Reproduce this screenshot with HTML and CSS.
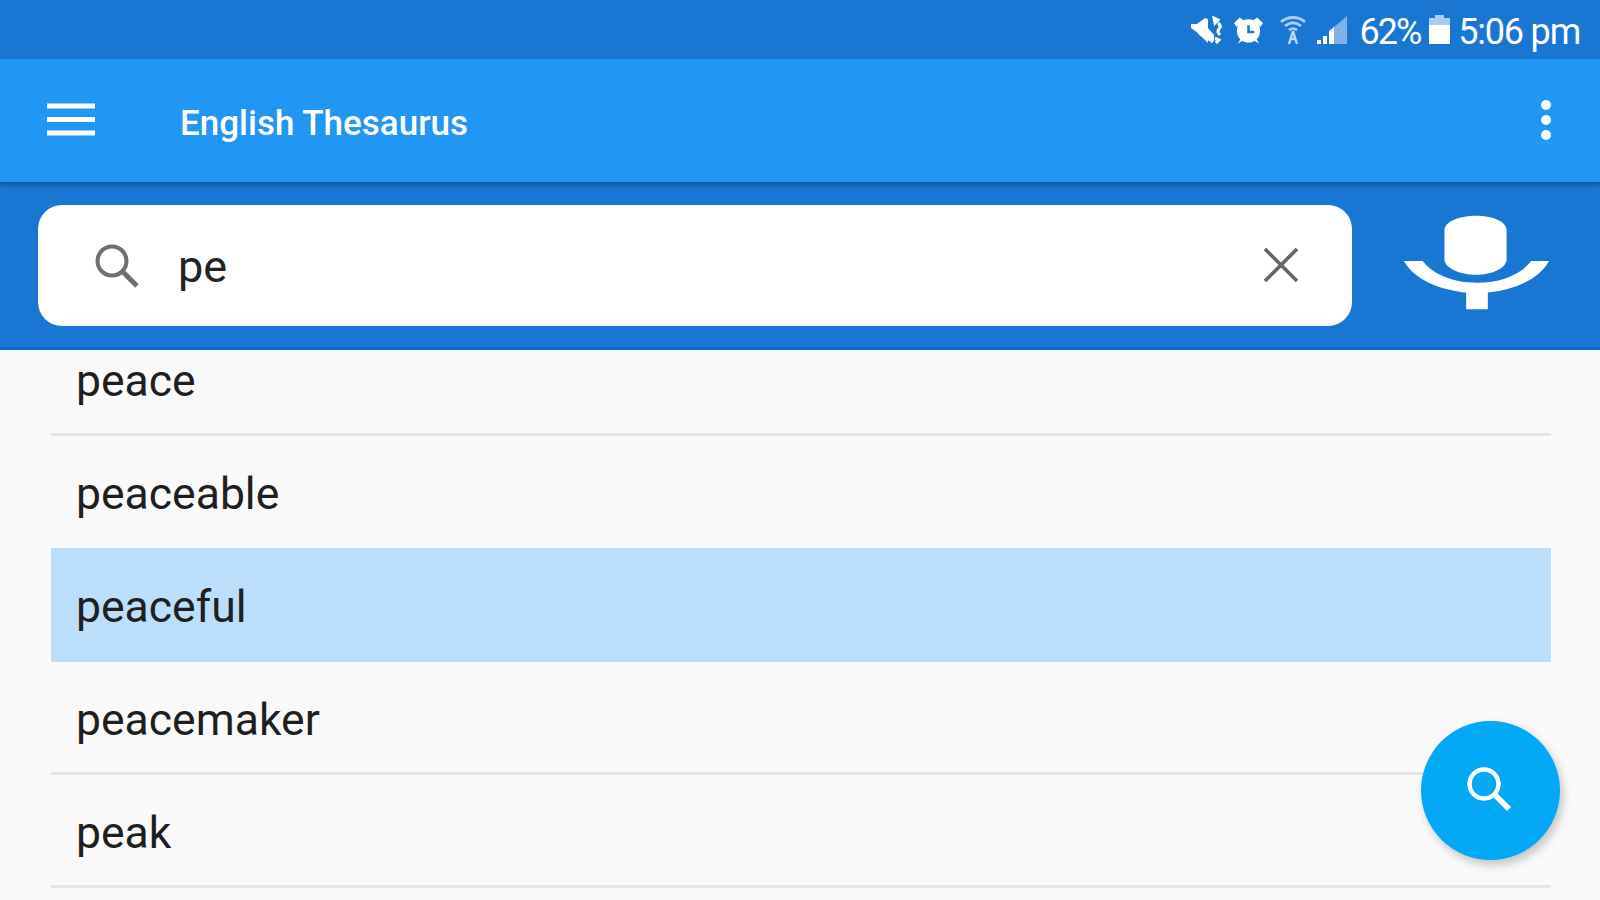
FILE: index.html
```html
<!DOCTYPE html>
<html lang="en">
<head>
  <meta charset="UTF-8">
  <meta name="viewport" content="width=device-width, initial-scale=1.0">
  <title>English Thesaurus</title>
  <link rel="stylesheet" href="styles.css">
</head>
<body>
  <div class="status-bar">
    <svg class="st-icon st-mute" viewBox="0 0 33 28">
      <path d="M0 8h6l8-6 3 1v9l6 7v6l-2 2L0 12z" fill="#fff"/>
      <path d="M6 17l6 5 5 5v-6z" fill="#fff"/>
      <path d="M23 2l4 2-3 3zM27 7c3 2 3 4 1 6s-1 4 1 6M24 22l4 2-3 3" stroke="#fff" stroke-width="3" fill="#fff"/>
    </svg>
    <svg class="st-icon st-alarm" viewBox="0 0 32 28">
      <circle cx="16" cy="15" r="12" fill="#fff"/>
      <path d="M1 7l6-6 4 3-7 7zM31 7l-6-6-4 3 7 7z" fill="#fff"/>
      <path d="M5 28l3-5 2 2zM27 28l-3-5-2 2z" fill="#fff"/>
      <path d="M16 9v7h6" stroke="#1976d2" stroke-width="2.6" fill="none"/>
    </svg>
    <svg class="st-icon st-wifi" viewBox="0 0 26 28">
      <path d="M1 6c7-6 17-6 24 0M5 10c5-4 11-4 16 0M9 14c3-2 5-2 8 0" stroke="#a9cdf0" stroke-width="2.8" fill="none"/>
      <path d="M13 15l-4 13M13 15l4 13M10 23h6" stroke="#bcd8f3" stroke-width="2.4" fill="none"/>
    </svg>
    <svg class="st-icon st-signal" viewBox="0 0 30 28">
      <path d="M30 0v28H17V11z" fill="#7fb2e8"/>
      <path d="M0 24h4v4H0zM6 20h4v8H6z" fill="#fff"/>
      <path d="M12 15l5-4v17h-5z" fill="#fff"/>
    </svg>
    <span class="st-text st-pct">62%</span>
    <svg class="st-icon st-batt" viewBox="0 0 21 29">
      <path d="M6 0h9v3h6v26H0V3h6z" fill="#a9cdf0"/>
      <path d="M0 10h21v19H0z" fill="#fff"/>
    </svg>
    <span class="st-text st-time">5:06 pm</span>
  </div>

  <header class="toolbar">
    <svg class="menu-icon" viewBox="0 0 48 33">
      <path d="M0 3h48M0 16.500h48M0 30h48" stroke="#fff" stroke-width="5"/>
    </svg>
    <h1 class="title">English Thesaurus</h1>
    <svg class="more-icon" viewBox="0 0 12 42">
      <circle cx="6" cy="6" r="5" fill="#fff"/>
      <circle cx="6" cy="21" r="5" fill="#fff"/>
      <circle cx="6" cy="36" r="5" fill="#fff"/>
    </svg>
  </header>

  <div class="search-area">
    <div class="search-box">
      <svg class="search-icon" viewBox="0 0 46 46">
        <circle cx="18" cy="18" r="14.500" stroke="#6f6f6f" stroke-width="4" fill="none"/>
        <path d="M28 28l15 15" stroke="#6f6f6f" stroke-width="5" fill="none"/>
      </svg>
      <span class="search-text">pe</span>
      <svg class="clear-icon" viewBox="0 0 36 36">
        <path d="M2 2l32 32M34 2L2 34" stroke="#666" stroke-width="3.600" fill="none"/>
      </svg>
    </div>
    <svg class="mic-icon" viewBox="0 0 148 96">
      <path d="M41 15C41 5 58 0 73 0s31 5 31 15v29c0 10-16 16-31 16S41 54 41 44z" fill="#fff"/>
      <path d="M0 46h19c11 14 31 22 55 22s44-8 55-22h18c-12 22-42 30-62 32v17H63V78C43 76 12 68 0 46z" fill="#fff"/>
    </svg>
  </div>

  <ul class="word-list">
    <li class="word">peace</li>
    <li class="word no-line">peaceable</li>
    <li class="word selected">peaceful</li>
    <li class="word">peacemaker</li>
    <li class="word">peak</li>
  </ul>

  <button class="fab">
    <svg viewBox="0 0 46 46">
      <circle cx="18" cy="18" r="14.500" stroke="#fff" stroke-width="4.500" fill="none"/>
      <path d="M28 28l15 15" stroke="#fff" stroke-width="5.500" fill="none"/>
    </svg>
  </button>
</body>
</html>
```

FILE: styles.css
```css
html, body {
  height: 100%;
}
body {
  margin: 0;
  overflow: hidden;
  background: #fafafa;
  font-family: 'Roboto', sans-serif;
  position: relative;
}
.status-bar {
  height: 59px;
  box-sizing: border-box;
  background: #1976d2;
  display: flex;
  align-items: center;
  justify-content: flex-end;
  padding-right: 20px;
  color: #fff;
}
.st-icon {
  display: block;
  flex: none;
}
.st-mute { width: 33px; height: 28px; margin-right: 9px; }
.st-alarm { width: 31px; height: 28px; margin-right: 16px; }
.st-wifi { width: 26px; height: 28px; margin-right: 11px; }
.st-signal { width: 30px; height: 28px; margin-right: 12px; }
.st-batt { width: 21px; height: 29px; margin-right: 8px; }
.st-text {
  font-size: 36px;
  line-height: 59px;
  padding-top: 5px;
  white-space: nowrap;
}
.st-pct { margin-right: 9px; letter-spacing: -2px; }
.st-time { letter-spacing: -1.200px; }

.toolbar {
  height: 123px;
  box-sizing: border-box;
  background: #2196f3;
  display: flex;
  align-items: center;
  padding: 0 48px 0 47px;
  box-shadow: 0 3px 4px rgba(0,0,0,0.28);
  position: relative;
}
.menu-icon {
  width: 48px;
  height: 33px;
  margin-top: -3px;
  flex: none;
}
.title {
  margin: 5px 0 0 85px;
  flex: 1;
  color: #fff;
  font-size: 35px;
  font-weight: 500;
}
.more-icon {
  width: 12px;
  height: 42px;
  margin-top: -2px;
  flex: none;
}

.search-area {
  height: 168px;
  box-sizing: border-box;
  background: #1976d2;
  border-bottom: 3px solid #0f69cf;
  display: flex;
  align-items: center;
  padding: 0 50px 0 38px;
}
.search-box {
  width: 1314px;
  height: 121px;
  margin-top: 2px;
  background: #fff;
  border-radius: 24px;
  display: flex;
  align-items: center;
  padding: 0 53px 0 56px;
  box-sizing: border-box;
  flex: none;
}
.search-icon {
  width: 46px;
  height: 46px;
  flex: none;
}
.search-text {
  flex: 1;
  margin-left: 38px;
  padding-top: 2px;
  font-size: 45px;
  color: #222;
}
.clear-icon {
  width: 36px;
  height: 36px;
  margin-top: -2px;
  flex: none;
}
.mic-icon {
  width: 146px;
  height: 96px;
  margin-left: 52px;
  margin-top: -3px;
  flex: none;
}

.word-list {
  list-style: none;
  margin: -27px 49px 0 51px;
  padding: 0;
}
.word {
  height: 113px;
  box-sizing: border-box;
  border-bottom: 3px solid #e6e6e6;
  padding: 6px 0 0 25px;
  display: flex;
  align-items: center;
  font-size: 44.500px;
  color: #1f1f1f;
}
.no-line {
  height: 112px;
  padding-top: 3px;
  border-bottom: none;
}
.selected {
  height: 114px;
  padding-top: 3px;
  background: #bbdefb;
  border-bottom: none;
}

.fab {
  position: absolute;
  left: 1421px;
  top: 721px;
  width: 139px;
  height: 139px;
  padding: 0;
  border: none;
  border-radius: 50%;
  background: #03a9f4;
  box-shadow: 3px 5px 10px rgba(0,0,0,0.22);
  display: flex;
  align-items: center;
  justify-content: center;
}
.fab svg {
  width: 46px;
  height: 46px;
  margin: 0 4px 4px 0;
}
```
